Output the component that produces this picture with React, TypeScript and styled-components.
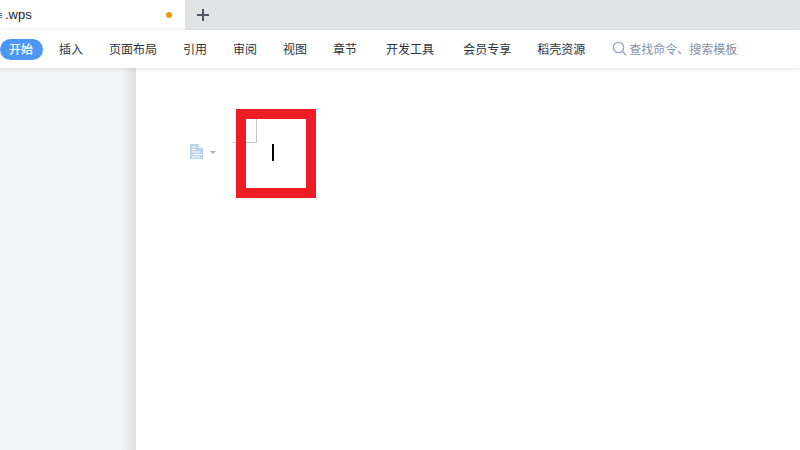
import { createGlobalStyle } from "styled-components";
import styled from "styled-components";

const Global = createGlobalStyle`
  html, body {
    margin: 0;
    padding: 0;
    background: #fff;
    overflow: hidden;
  }
  body {
    font-family: "Noto Sans CJK SC", "Liberation Sans", sans-serif;
  }
`;

const Shell = styled.div`
  width: 800px;
  height: 450px;
  display: flex;
  flex-direction: column;
  overflow: hidden;
`;
const TabBar = styled.div`
  height: 30px;
  background-color: #e1e3e7;
  display: flex;
  align-items: center;
`;
const ActiveTab = styled.div`
  width: 185px;
  height: 100%;
  box-sizing: border-box;
  background-color: #fff;
  display: flex;
  align-items: center;
  padding-right: 13px;
`;
const TabGlyphEdge = styled.span`
  width: 2px;
  height: 5px;
  margin: 1px 3px 0 0;
  background: repeating-linear-gradient(to bottom, #3a76c8 0, #3a76c8 1px, transparent 1px, transparent 2px);
`;
const TabName = styled.span`
  flex: 1;
  font-family: "Liberation Sans", sans-serif;
  font-size: 13px;
  color: #222;
  padding-bottom: 1px;
`;
const UnsavedDot = styled.span`
  width: 6px;
  height: 6px;
  border-radius: 50%;
  background-color: #ea9b0c;
`;
const NewTab = styled.div`
  width: 36px;
  display: flex;
  justify-content: center;
  color: #4e5668;
`;
const Ribbon = styled.div`
  position: relative;
  z-index: 2;
  height: 38px;
  background-color: #fff;
  box-shadow: 0 1px 4px rgba(0, 0, 0, 0.12);
  display: flex;
  align-items: center;
`;
const Menu = styled.div`
  display: flex;
  align-items: center;
  height: 21px;
  margin-top: 1px;
`;
const MenuItem = styled.div<{ $wide?: boolean }>`
  font-size: 12px;
  line-height: 19px;
  padding-bottom: 2px;
  color: #2c3340;
  white-space: nowrap;
  margin-left: ${(p) => (p.$wide ? "29px" : "26px")};
`;
const ActiveItem = styled.div`
  font-size: 12px;
  line-height: 19px;
  padding: 0 10px 2px 9px;
  font-weight: 500;
  color: #fff;
  background-color: #4c97f6;
  border-radius: 11px;
  margin-right: -10px;
`;
const Search = styled.div`
  display: flex;
  align-items: center;
  gap: 2px;
  margin-left: 27px;
  font-size: 12px;
  line-height: 19px;
  padding-bottom: 2px;
  color: #8590a6;
  white-space: nowrap;
`;
const Body = styled.div`
  flex: 1;
  display: flex;
  min-height: 0;
`;
const Sidebar = styled.div`
  width: 136px;
  flex-shrink: 0;
  background: linear-gradient(to right, #f4f5f7 0, #f4f5f7 121px, #e0e1e3 136px);
`;
const Page = styled.div`
  position: relative;
  flex: 1;
  background-color: #fff;
  box-sizing: border-box;
  padding: 76px 0 0 54px;
`;
const ParagraphTool = styled.div`
  display: flex;
  align-items: center;
  gap: 7px;
`;
const Caret = styled.span`
  width: 0;
  height: 0;
  border-left: 3px solid transparent;
  border-right: 3px solid transparent;
  border-top: 3px solid #aeb1b6;
  margin-top: 1px;
`;
const MarginCorner = styled.div`
  position: absolute;
  left: 97px;
  top: 51px;
  width: 23px;
  height: 23px;
  border-right: 1px solid #c6c6c6;
  border-bottom: 1px solid #c6c6c6;
`;
const Highlight = styled.div`
  position: absolute;
  left: 100px;
  top: 41px;
  width: 60px;
  height: 69px;
  border: 10px solid #ee1c25;
`;
const Cursor = styled.div`
  position: absolute;
  left: 26px;
  top: 25px;
  width: 2px;
  height: 17px;
  background-color: #000;
`;

const menus = [
  { title: "插入" },
  { title: "页面布局" },
  { title: "引用" },
  { title: "审阅" },
  { title: "视图" },
  { title: "章节" },
  { title: "开发工具", wide: true },
  { title: "会员专享", wide: true },
  { title: "稻壳资源" },
];

const PlusIcon = () => (
  <svg width="12" height="12" viewBox="0 0 12 12">
    <path d="M6 0v12M0 6h12" stroke="currentColor" strokeWidth="2" fill="none" />
  </svg>
);

const SearchIcon = () => (
  <svg width="15" height="15" viewBox="0 0 15 15">
    <circle cx="6.5" cy="6.5" r="5.2" stroke="#9aa5ba" strokeWidth="1.3" fill="none" />
    <path d="M10.4 10.4l3.8 3.8" stroke="#9aa5ba" strokeWidth="1.4" fill="none" />
  </svg>
);

const ParagraphIcon = () => (
  <svg width="13" height="15" viewBox="0 0 13 15" style={{ display: "block" }}>
    <path d="M0 0h8l5 5v10H0z" fill="#bdd0ec" />
    <path d="M8.5 0.8l3.8 3.8H8.5z" fill="#e6eef9" />
    <path d="M2 3h4M2 5.5h4M2 8h8M3 10.5h9M2 13h8" stroke="#fff" strokeWidth="1" fill="none" />
  </svg>
);

export default () => {
  return (
    <Shell>
      <Global />
      <TabBar>
        <ActiveTab>
          <TabGlyphEdge />
          <TabName>.wps</TabName>
          <UnsavedDot />
        </ActiveTab>
        <NewTab>
          <PlusIcon />
        </NewTab>
      </TabBar>
      <Ribbon>
        <Menu>
          <ActiveItem>开始</ActiveItem>
          {menus.map((item) => (
            <MenuItem key={item.title} $wide={item.wide}>
              {item.title}
            </MenuItem>
          ))}
          <Search>
            <SearchIcon />
            查找命令、搜索模板
          </Search>
        </Menu>
      </Ribbon>
      <Body>
        <Sidebar />
        <Page>
          <ParagraphTool>
            <ParagraphIcon />
            <Caret />
          </ParagraphTool>
          <MarginCorner />
          <Highlight>
            <Cursor />
          </Highlight>
        </Page>
      </Body>
    </Shell>
  );
};
